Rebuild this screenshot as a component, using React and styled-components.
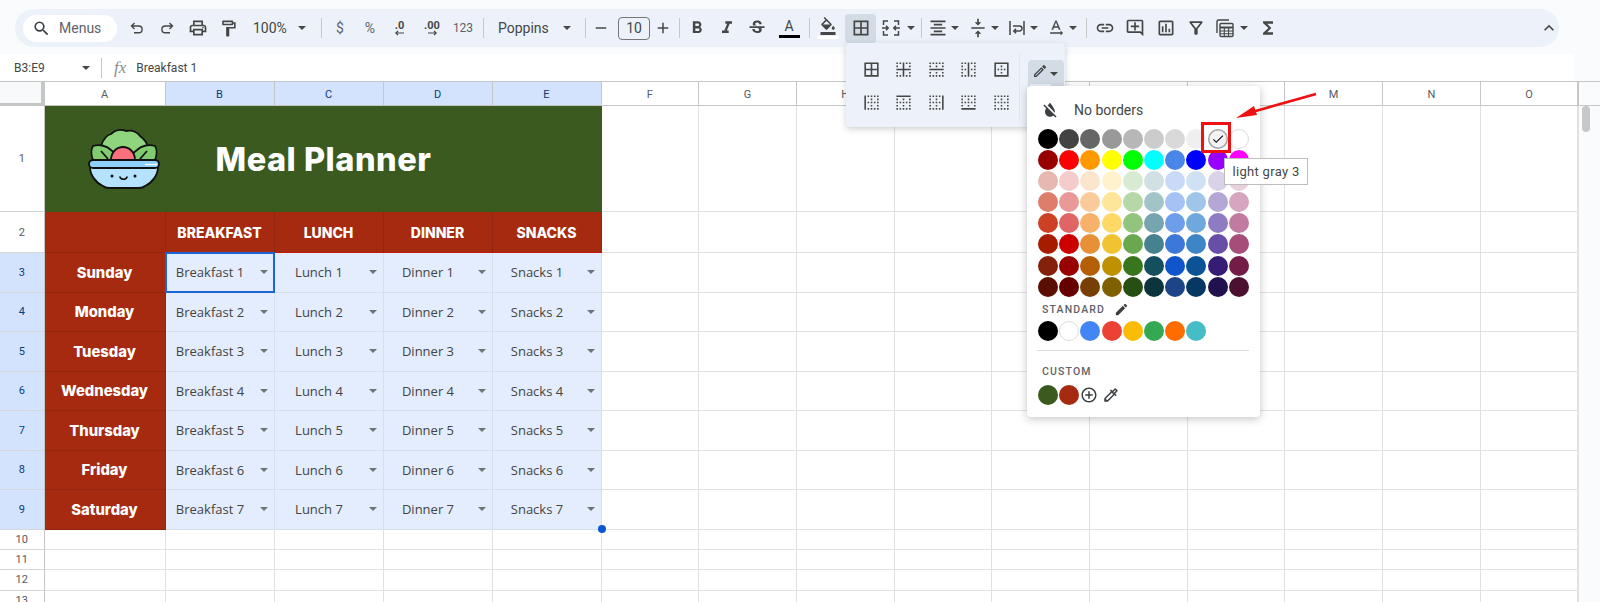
import React from "react";
import styled, { createGlobalStyle } from "styled-components";
import {
  MdSearch, MdOutlinePrint, MdOutlineFormatPaint, MdRemove, MdAdd,
  MdFormatBold, MdFormatItalic, MdStrikethroughS, MdOutlineFormatColorFill, MdBorderAll,
  MdFormatAlignCenter, MdVerticalAlignCenter, MdTextRotationNone, MdLink, MdOutlineAddComment,
  MdOutlineInsertChart, MdOutlineFilterAlt, MdFunctions, MdExpandLess, MdBorderInner,
  MdBorderHorizontal, MdBorderVertical, MdBorderOuter, MdBorderLeft, MdBorderTop, MdBorderRight,
  MdBorderBottom, MdBorderClear, MdOutlineEdit, MdEdit, MdFormatColorReset, MdCheck,
  MdAddCircleOutline, MdOutlineColorize,
} from "react-icons/md";

const GlobalStyle = createGlobalStyle`
  html, body { margin: 0; padding: 0; background: #f9fbfd; }
  body { font-family: Roboto, "Liberation Sans", sans-serif; color: #444746; }
`;

const Page = styled.div`
  position: relative;
  width: 1600px;
  height: 602px;
  overflow: hidden;
  background: #f9fbfd;
`;

const ToolbarWrap = styled.div`
  height: 54px;
  padding: 9px 41px 0 15px;
  box-sizing: border-box;
`;

const Toolbar = styled.div`
  height: 38px;
  display: flex;
  align-items: center;
  padding-left: 8px;
  background: #edf2fa;
  border-radius: 19px;
  color: #444746;
`;

const SearchPill = styled.div`
  width: 94px;
  height: 27px;
  flex: none;
  display: flex;
  align-items: center;
  gap: 8px;
  padding-left: 9px;
  box-sizing: border-box;
  background: #fff;
  border-radius: 14px;
  font-size: 14px;
  color: #5f6368;
  svg { font-size: 19px; color: #3c4043; }
`;

const Tool = styled.div`
  width: ${(p) => p.$w || 30}px;
  margin-left: ${(p) => p.$ml || 0}px;
  height: 29px;
  flex: none;
  display: flex;
  align-items: center;
  justify-content: center;
  border-radius: 4px;
  font-size: ${(p) => p.$fs || 20}px;
  background: ${(p) => (p.$active ? "#d3dbe5" : "transparent")};
`;

const TextTool = styled(Tool)`
  font-size: ${(p) => p.$fs || 12}px;
  color: ${(p) => p.$color || "#5f6368"};
`;

const SelectTool = styled.div`
  width: ${(p) => p.$w}px;
  margin-left: ${(p) => p.$ml || 0}px;
  padding: 0 7px 0 10px;
  box-sizing: border-box;
  flex: none;
  display: flex;
  align-items: center;
  justify-content: space-between;
  font-size: 14px;
  color: #444746;
`;

const Sep = styled.div`
  width: 1px;
  height: 20px;
  flex: none;
  margin-left: ${(p) => p.$ml || 0}px;
  background: #c7c7c7;
`;

const Caret = styled.span`
  display: inline-block;
  flex: none;
  width: 0;
  height: 0;
  margin-top: ${(p) => p.$mt || 0}px;
  border-left: 4px solid transparent;
  border-right: 4px solid transparent;
  border-top: 4px solid ${(p) => p.$color || "#444746"};
`;

const CaretTool = styled.div`
  width: ${(p) => p.$w || 12}px;
  margin-left: ${(p) => p.$ml || 0}px;
  flex: none;
  display: flex;
  justify-content: center;
`;

const FontSizeBox = styled.div`
  width: 32px;
  height: 23px;
  margin-left: 2px;
  flex: none;
  display: flex;
  align-items: center;
  justify-content: center;
  box-sizing: border-box;
  border: 1px solid #747775;
  border-radius: 4px;
  font-size: 14px;
`;

const ColorStack = styled.div`
  display: flex;
  flex-direction: column;
  align-items: center;
  line-height: 1;
`;

const ColorLetter = styled.span`
  height: 15px;
  font-size: 14px;
  line-height: 15px;
  color: #444746;
`;

const ColorBar = styled.div`
  width: ${(p) => p.$w || 21}px;
  height: 3px;
  margin-top: 1px;
  background: ${(p) => p.$color};
`;

const SmallDec = styled.div`
  display: flex;
  flex-direction: column;
  align-items: center;
  font-size: 11px;
  font-weight: 700;
  line-height: 10px;
  color: #444746;
  svg { display: block; margin-top: -1px; }
`;

const FormulaBar = styled.div`
  height: 28px;
  width: 1574px;
  display: flex;
  align-items: center;
  background: #fff;
  font-size: 12px;
  color: #444746;
`;

const NameBox = styled.div`
  width: 101px;
  padding: 0 11px 0 14px;
  box-sizing: border-box;
  display: flex;
  align-items: center;
  justify-content: space-between;
`;

const FxLabel = styled.span`
  margin: 0 10px 0 12px;
  font-family: "Liberation Serif", serif;
  font-style: italic;
  font-size: 17px;
  color: #8a8d90;
`;

const Sheet = styled.div`
  display: grid;
  grid-template-columns: 44.5px 121px repeat(4, 109px) repeat(10, 97.7px) 1fr;
  grid-template-rows: 24px 106px 41px repeat(7, 39.5px) repeat(4, 20.4px);
  background: #fff;
  border-top: 1px solid #c4c7c5;
  margin-top: -1px;
  height: 521px;
`;

const Corner = styled.div`
  background: #f8f9fa;
  border-right: 4px solid #c4c7c5;
  border-bottom: 3px solid #c4c7c5;
  box-sizing: border-box;
`;

const ColHead = styled.div`
  display: flex;
  align-items: center;
  justify-content: center;
  padding-top: 1px;
  box-sizing: border-box;
  font-size: 11px;
  color: ${(p) => (p.$selected ? "#0b3a78" : "#575a5e")};
  background: ${(p) => (p.$selected ? "#d3e3fd" : "#fff")};
  border-right: 1px solid #c4c7c5;
  border-bottom: 1px solid #c4c7c5;
`;

const RowHead = styled.div`
  display: flex;
  align-items: center;
  justify-content: center;
  box-sizing: border-box;
  font-size: 11px;
  color: ${(p) => (p.$selected ? "#0b3a78" : "#575a5e")};
  background: ${(p) => (p.$selected ? "#d3e3fd" : "#fff")};
  border-right: 1px solid #c4c7c5;
  border-bottom: 1px solid #d4d6d8;
`;

const Blank = styled.div`
  box-sizing: border-box;
  border-right: 1px solid #e1e1e1;
  border-bottom: 1px solid #e1e1e1;
`;

const TitleCell = styled.div`
  grid-column: 2 / 7;
  display: flex;
  align-items: center;
  padding-left: 43px;
  gap: 56px;
  background: #3a5a1f;
  box-sizing: border-box;
  border-bottom: 1px solid #3a5a1f;
`;

const Title = styled.div`
  padding-top: 1px;
  font-family: Inter, "Liberation Sans", sans-serif;
  font-size: 32.5px;
  font-weight: 800;
  letter-spacing: 0.5px;
  color: #fff;
`;

const RedCell = styled.div`
  display: flex;
  align-items: center;
  justify-content: center;
  padding-top: ${(p) => p.$pt || 0}px;
  box-sizing: border-box;
  background: #a52a0f;
  color: #fff;
  font-family: Inter, "Liberation Sans", sans-serif;
  font-weight: 800;
  font-size: ${(p) => p.$fs || 14}px;
  border-right: 1px solid #93260e;
  border-bottom: 1px solid ${(p) => (p.$line ? "#c4170a" : "#93260e")};
`;

const DropCell = styled.div`
  position: relative;
  display: flex;
  align-items: center;
  box-sizing: border-box;
  background: #e3edfd;
  border-right: 1px solid #d5dfee;
  border-bottom: 1px solid #d5dfee;
  font-family: "Open Sans", Inter, sans-serif;
  font-size: 13px;
  color: #444;
`;

const CellLabel = styled.span`
  flex: 1;
  text-align: center;
`;

const CellCaret = styled.span`
  flex: none;
  width: 19px;
  display: flex;
  justify-content: center;
  padding-right: 1px;
  box-sizing: border-box;
`;

const ActiveOutline = styled.div`
  position: absolute;
  inset: -1px;
  border: 2px solid #1a66d8;
  pointer-events: none;
`;

const Handle = styled.div`
  position: absolute;
  right: -5px;
  bottom: -4px;
  width: 8px;
  height: 8px;
  border-radius: 50%;
  background: #0b57d0;
  z-index: 2;
`;

const ScrollRail = styled.div`
  grid-column: 17;
  grid-row: 2 / 15;
  background: #f9fbfd;
  border-left: 1px solid #e1e1e1;
`;

const ScrollThumb = styled.div`
  width: 8px;
  height: 26px;
  margin-left: 3px;
  border-radius: 4px;
  background: #c6c9cc;
`;

const ScrollCorner = styled.div`
  background: #f9fbfd;
  border-bottom: 1px solid #c4c7c5;
  border-left: 1px solid #c4c7c5;
`;

const BorderMenu = styled.div`
  position: absolute;
  left: 846px;
  top: 43px;
  width: 219px;
  height: 84px;
  padding: 10px 0 0 9px;
  box-sizing: border-box;
  display: flex;
  background: #edf2fa;
  border-radius: 4px;
  box-shadow: 0 2px 6px rgba(60, 64, 67, 0.25);
`;

const BorderGrid = styled.div`
  display: grid;
  grid-template-columns: repeat(5, 32.5px);
  grid-auto-rows: 33px;
  align-items: center;
  justify-items: center;
  font-size: 19px;
  color: #444746;
`;

const MenuSep = styled.div`
  width: 1px;
  height: 66px;
  margin-left: 1px;
  background: #e2e6ee;
`;

const PenButton = styled.div`
  position: relative;
  width: 36px;
  height: 28px;
  margin: 7px 0 0 8px;
  display: flex;
  align-items: flex-start;
  gap: 2px;
  padding: 3px 0 0 4px;
  box-sizing: border-box;
  background: #d3dbe5;
  border-radius: 4px 4px 0 0;
  font-size: 16px;
  color: #3c4043;
`;

const PenBar = styled.div`
  position: absolute;
  left: 2px;
  bottom: 1px;
  width: 21px;
  height: 3px;
  background: #edf2fa;
`;

const ColorMenu = styled.div`
  position: absolute;
  left: 1027px;
  top: 86px;
  width: 233px;
  height: 331px;
  padding: 5px 0 0 11px;
  box-sizing: border-box;
  background: #fff;
  border-radius: 4px;
  box-shadow: 0 2px 8px rgba(60, 64, 67, 0.3);
`;

const NoBorders = styled.div`
  height: 38px;
  display: flex;
  align-items: center;
  gap: 14px;
  padding-left: 2px;
  font-size: 14px;
  color: #444746;
  svg { font-size: 20px; color: #3c4043; }
`;

const SwatchGrid = styled.div`
  display: grid;
  grid-template-columns: repeat(10, 21.2px);
  grid-auto-rows: 21.1px;
`;

const SwatchRow = styled.div`
  display: flex;
  align-items: center;
  height: 20px;
  margin-top: ${(p) => p.$mt || 0}px;
  color: #3c4043;
`;

const Swatch = styled.div`
  width: 20px;
  height: 20px;
  flex: none;
  margin-right: 1.2px;
  display: flex;
  align-items: center;
  justify-content: center;
  box-sizing: border-box;
  border-radius: 50%;
  font-size: 14px;
  color: #111;
  background: ${(p) => p.$color};
  border: ${(p) => (p.$outlined ? "1px solid #dcdcdc" : "none")};
  box-shadow: ${(p) => (p.$selected ? "inset 0 0 0 1.5px #a3a3a3" : "none")};
`;

const Heading = styled.div`
  height: ${(p) => p.$h || 23}px;
  display: flex;
  align-items: center;
  gap: 9px;
  padding-left: 4px;
  font-size: 10.5px;
  font-weight: 500;
  letter-spacing: 1.15px;
  color: #5f6368;
  svg { font-size: 15px; color: #3c4043; }
`;

const MenuDivider = styled.div`
  width: 212px;
  height: 1px;
  margin: 9px 0 10px -1px;
  background: #dadce0;
`;

const RedBox = styled.div`
  position: absolute;
  left: 1201px;
  top: 122px;
  width: 30px;
  height: 31px;
  box-sizing: border-box;
  border: 3px solid #ee1111;
`;

const Tooltip = styled.div`
  position: absolute;
  left: 1224px;
  top: 158px;
  width: 84px;
  height: 27px;
  display: flex;
  align-items: center;
  justify-content: center;
  box-sizing: border-box;
  background: #fff;
  border: 1px solid #bdbdbd;
  font-size: 13px;
  letter-spacing: 0.3px;
  color: #444746;
`;

const ArrowSvg = styled.svg`
  position: absolute;
  left: 1230px;
  top: 88px;
`;

const AddIcon = styled.div`
  font-size: 18px;
  display: flex;
  margin-left: ${(p) => p.$ml || 0}px;
`;

const cols = ["A", "B", "C", "D", "E", "F", "G", "H", "I", "J", "K", "L", "M", "N", "O"];
const days = ["Sunday", "Monday", "Tuesday", "Wednesday", "Thursday", "Friday", "Saturday"];
const meals = ["Breakfast", "Lunch", "Dinner", "Snacks"];
const emptyCols = Array.from({ length: 10 });

const palette = [
  ["#000000", "#434343", "#666666", "#999999", "#b7b7b7", "#cccccc", "#d9d9d9", "#efefef", "#f3f3f3", "#ffffff"],
  ["#980000", "#ff0000", "#ff9900", "#ffff00", "#00ff00", "#00ffff", "#4a86e8", "#0000ff", "#9900ff", "#ff00ff"],
  ["#e6b8af", "#f4cccc", "#fce5cd", "#fff2cc", "#d9ead3", "#d0e0e3", "#c9daf8", "#cfe2f3", "#d9d2e9", "#ead1dc"],
  ["#dd7e6b", "#ea9999", "#f9cb9c", "#ffe599", "#b6d7a8", "#a2c4c9", "#a4c2f4", "#9fc5e8", "#b4a7d6", "#d5a6bd"],
  ["#cc4125", "#e06666", "#f6b26b", "#ffd966", "#93c47d", "#76a5af", "#6d9eeb", "#6fa8dc", "#8e7cc3", "#c27ba0"],
  ["#a61c00", "#cc0000", "#e69138", "#f1c232", "#6aa84f", "#45818e", "#3c78d8", "#3d85c6", "#674ea7", "#a64d79"],
  ["#85200c", "#990000", "#b45f06", "#bf9000", "#38761d", "#134f5c", "#1155cc", "#0b5394", "#351c75", "#741b47"],
  ["#5b0f00", "#660000", "#783f04", "#7f6000", "#274e13", "#0c343d", "#1c4587", "#073763", "#20124d", "#4c1130"],
];
const standard = ["#000000", "#ffffff", "#4285f4", "#ea4335", "#fbbc04", "#34a853", "#ff6d01", "#46bdc6"];

const UndoIcon = ({ flip }) => (
  <svg width="18" height="18" viewBox="0 0 18 18" fill="none" stroke="#444746" strokeWidth="1.4"
    transform={flip ? "scale(-1 1)" : undefined}>
    <path d="M6.5 4 3.5 7l3 3M3.5 7h7.2a3.4 3.4 0 0 1 0 6.8H6" />
  </svg>
);

const MergeIcon = () => (
  <svg width="20" height="20" viewBox="0 0 20 20" fill="none" stroke="#444746" strokeWidth="1.5">
    <path d="M7 3H2.5v4M2.5 13v4H7M13 3h4.5v4M17.5 13v4H13" />
    <path d="M1 10h6M5 7.8 7.2 10 5 12.2M19 10h-6M15 7.8 12.8 10l2.2 2.2" />
  </svg>
);

const WrapIcon = () => (
  <svg width="20" height="20" viewBox="0 0 20 20" fill="none" stroke="#444746" strokeWidth="1.5">
    <path d="M3 3v14M17 3v14" />
    <path d="M6 8h6.5a2 2 0 0 1 0 5H7M9 10.8 6.8 13 9 15.2" />
  </svg>
);

const CalcIcon = () => (
  <svg width="20" height="20" viewBox="0 0 20 20" fill="none" stroke="#444746" strokeWidth="1.4">
    <path d="M14 2H3.5A1.5 1.5 0 0 0 2 3.5V15" />
    <rect x="5" y="5.5" width="13" height="13" rx="1" />
    <path d="M5 9.5h13" strokeWidth="2" />
    <path d="M5 13h13M5 15.8h13M9.3 10v8.5M13.6 10v8.5" strokeWidth="1.1" />
  </svg>
);

const SaladBowl = () => (
  <svg width="72" height="60" viewBox="0 0 72 60">
    <g stroke="#111" strokeWidth="1.8" strokeLinejoin="round">
      <path d="M13 30V17c2-6 6-11 10-12 4-4 10-5 15-3 6-1 11 1 14 5 4 3 7 7 8 11v12z" fill="#8fd57d" />
      <path d="M5 31c-2-5-2-11 0-14 7-2 14 0 18 4 4 3 7 6 9 10z" fill="#7fcb6e" />
      <path d="M67 31c2-5 2-11 0-14-7-2-14 0-18 4-4 3-7 6-9 10z" fill="#7fcb6e" />
      <path d="M23 31c0-8 6-13 12-13s12 5 12 13z" fill="#f8717d" />
      <path d="M13 22l7 8M59 22l-7 8" fill="none" />
      <path d="M2 38h68c0 8-6 16-13 19-2 2-4 2-6 2H21c-2 0-4 0-6-2C8 54 2 46 2 38z" fill="#b5e3fd" />
      <rect x="1" y="31" width="70" height="8" rx="4" fill="#8ed0fb" />
    </g>
    <path d="M57 35.5h12" stroke="#fff" strokeWidth="1.3" />
    <circle cx="24" cy="47" r="1.5" fill="#111" />
    <circle cx="47" cy="47" r="1.5" fill="#111" />
    <path d="M32 48c1 3 6 3 7 0" stroke="#111" strokeWidth="1.7" fill="none" strokeLinecap="round" />
  </svg>
);

const Grid = () => (
  <Sheet>
    <Corner />
    {cols.map((c, i) => (
      <ColHead key={c} $selected={i >= 1 && i <= 4}>{c}</ColHead>
    ))}
    <ScrollCorner />

    <RowHead>1</RowHead>
    <TitleCell>
      <SaladBowl />
      <Title>Meal Planner</Title>
    </TitleCell>
    {emptyCols.map((_, i) => <Blank key={i} />)}
    <ScrollRail><ScrollThumb /></ScrollRail>

    <RowHead>2</RowHead>
    <RedCell />
    {meals.map((m) => <RedCell key={m} $line>{m.toUpperCase()}</RedCell>)}
    {emptyCols.map((_, i) => <Blank key={i} />)}

    {days.map((day, r) => (
      <React.Fragment key={day}>
        <RowHead $selected>{r + 3}</RowHead>
        <RedCell $fs={14.8} $pt={1}>{day}</RedCell>
        {meals.map((m, c) => (
          <DropCell key={m}>
            <CellLabel>{m} {r + 1}</CellLabel>
            <CellCaret><Caret $color="#6f7377" /></CellCaret>
            {r === 0 && c === 0 && <ActiveOutline />}
            {r === 6 && c === 3 && <Handle />}
          </DropCell>
        ))}
        {emptyCols.map((_, i) => <Blank key={i} />)}
      </React.Fragment>
    ))}

    {[10, 11, 12, 13].map((n) => (
      <React.Fragment key={n}>
        <RowHead>{n}</RowHead>
        {cols.map((c) => <Blank key={c} />)}
      </React.Fragment>
    ))}
  </Sheet>
);

export default function App() {
  return (
    <Page>
      <GlobalStyle />
      <ToolbarWrap>
        <Toolbar>
          <SearchPill><MdSearch />Menus</SearchPill>
          <Tool $ml={5}><UndoIcon /></Tool>
          <Tool><UndoIcon flip /></Tool>
          <Tool $ml={1}><MdOutlinePrint /></Tool>
          <Tool><MdOutlineFormatPaint size={19} /></Tool>
          <SelectTool $w={70}>100%<Caret /></SelectTool>
          <Sep $ml={8} />
          <TextTool $ml={3} $fs={14}>$</TextTool>
          <TextTool $fs={14}>%</TextTool>
          <Tool $w={29}>
            <SmallDec>
              .0
              <svg width="11" height="6" viewBox="0 0 11 6"><path d="M10 3H2M4 .8 1.8 3 4 5.2" fill="none" stroke="#444746" strokeWidth="1.2" /></svg>
            </SmallDec>
          </Tool>
          <Tool $ml={3}>
            <SmallDec>
              .00
              <svg width="11" height="6" viewBox="0 0 11 6"><path d="M1 3h8M7 .8 9.2 3 7 5.2" fill="none" stroke="#444746" strokeWidth="1.2" /></svg>
            </SmallDec>
          </Tool>
          <TextTool $ml={1}>123</TextTool>
          <Sep $ml={5} />
          <SelectTool $w={90} $ml={4}>Poppins<Caret /></SelectTool>
          <Sep $ml={7} />
          <Tool $w={30}><MdRemove size={18} /></Tool>
          <FontSizeBox>10</FontSizeBox>
          <Tool $w={26}><MdAdd size={18} /></Tool>
          <Sep $ml={3} />
          <Tool $ml={2}><MdFormatBold /></Tool>
          <Tool><MdFormatItalic /></Tool>
          <Tool><MdStrikethroughS /></Tool>
          <Tool $ml={2}>
            <ColorStack>
              <ColorLetter>A</ColorLetter>
              <ColorBar $color="#000" />
            </ColorStack>
          </Tool>
          <Sep $ml={5} />
          <Tool $ml={3}>
            <ColorStack>
              <MdOutlineFormatColorFill size={18} />
              <ColorBar $color="#fff" $w={22} />
            </ColorStack>
          </Tool>
          <Tool $w={31} $ml={2} $active><MdBorderAll /></Tool>
          <Tool><MergeIcon /></Tool>
          <CaretTool $w={10}><Caret /></CaretTool>
          <Sep $ml={5} />
          <Tool $w={24} $ml={4}><MdFormatAlignCenter /></Tool>
          <CaretTool $w={10}><Caret /></CaretTool>
          <Tool $w={24} $ml={6}><MdVerticalAlignCenter /></Tool>
          <CaretTool $w={10}><Caret /></CaretTool>
          <Tool $w={24} $ml={5}><WrapIcon /></Tool>
          <CaretTool $w={10}><Caret /></CaretTool>
          <Tool $w={24} $ml={5}><MdTextRotationNone /></Tool>
          <CaretTool $w={10}><Caret /></CaretTool>
          <Sep $ml={8} />
          <Tool $ml={3}><MdLink /></Tool>
          <Tool><MdOutlineAddComment /></Tool>
          <Tool $ml={1}><MdOutlineInsertChart /></Tool>
          <Tool><MdOutlineFilterAlt /></Tool>
          <Tool $w={28}><CalcIcon /></Tool>
          <CaretTool $w={10}><Caret /></CaretTool>
          <Tool $ml={4}><MdFunctions /></Tool>
          <Tool $w={20} $ml={256}><MdExpandLess /></Tool>
        </Toolbar>
      </ToolbarWrap>

      <FormulaBar>
        <NameBox>B3:E9<Caret /></NameBox>
        <Sep />
        <FxLabel>fx</FxLabel>
        Breakfast 1
      </FormulaBar>

      <Grid />

      <BorderMenu>
        <BorderGrid>
          <MdBorderAll />
          <MdBorderInner />
          <MdBorderHorizontal />
          <MdBorderVertical />
          <MdBorderOuter />
          <MdBorderLeft />
          <MdBorderTop />
          <MdBorderRight />
          <MdBorderBottom />
          <MdBorderClear />
        </BorderGrid>
        <MenuSep />
        <PenButton>
          <MdOutlineEdit />
          <Caret $mt={9} />
          <PenBar />
        </PenButton>
      </BorderMenu>

      <ColorMenu>
        <NoBorders><MdFormatColorReset />No borders</NoBorders>
        <SwatchGrid>
          {palette.flat().map((c, i) => (
            <Swatch key={i} $color={c} $outlined={c === "#ffffff"} $selected={i === 8}>
              {i === 8 && <MdCheck />}
            </Swatch>
          ))}
        </SwatchGrid>
        <Heading>STANDARD<MdEdit /></Heading>
        <SwatchRow>
          {standard.map((c) => <Swatch key={c} $color={c} $outlined={c === "#ffffff"} />)}
        </SwatchRow>
        <MenuDivider />
        <Heading $h={21}>CUSTOM</Heading>
        <SwatchRow $mt={3}>
          <Swatch $color="#3a5a1f" />
          <Swatch $color="#a52a0f" />
          <AddIcon><MdAddCircleOutline /></AddIcon>
          <AddIcon $ml={4}><MdOutlineColorize /></AddIcon>
        </SwatchRow>
      </ColorMenu>

      <RedBox />
      <Tooltip>light gray 3</Tooltip>
      <ArrowSvg width="100" height="40" viewBox="0 0 100 40">
        <path d="M86 6 22 24" stroke="#ee1111" strokeWidth="2.6" />
        <path d="M6 30 24 18 27 27z" fill="#ee1111" />
      </ArrowSvg>
    </Page>
  );
}
